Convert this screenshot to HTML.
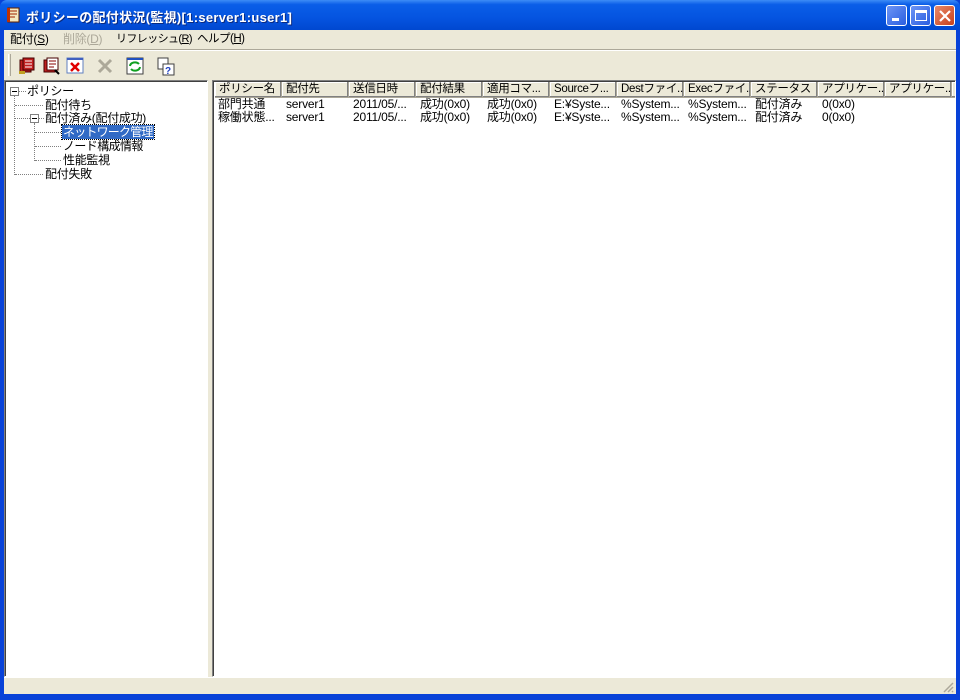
<!DOCTYPE html>
<html><head><meta charset="utf-8"><style>
*{margin:0;padding:0;box-sizing:border-box}
body{width:960px;height:700px;overflow:hidden;background:#0842d8;font-family:"Liberation Sans","Noto Sans CJK JP",sans-serif;font-size:12px;position:relative}
.abs{position:absolute}
#title{left:0;top:0;width:960px;height:30px;background:linear-gradient(#3d8cf6,#0a5ee8 15%,#0554e0 60%,#0048d0);border-radius:7px 7px 0 0}
#title .t{left:26px;top:7px;color:#fff;font-weight:bold;font-size:13px;letter-spacing:0.3px;text-shadow:1px 1px #0a2a80}
.btn{top:5px;width:21px;height:21px;border:1px solid #fff;border-radius:3px;background:linear-gradient(135deg,#6d95f5,#2a5ee0)}
#client{left:4px;top:30px;width:952px;height:664px;background:#ece9d8}
.tx{position:absolute;white-space:nowrap;line-height:13px;letter-spacing:-0.3px}
.pane{background:#fff;border-top:1px solid #808080;border-left:1px solid #808080;border-right:1px solid #fff;border-bottom:1px solid #fff;box-shadow:inset 1px 1px #404040}
.tb{position:absolute;top:25px;width:22px;height:22px}
.hd{position:absolute;top:1px;height:16px;background:#ece9d8;border-right:1px solid #aca899;border-bottom:1px solid #aca899;box-shadow:inset -1px -1px #808080,inset 1px 1px #fff;padding-left:4px;line-height:15px;white-space:nowrap;overflow:hidden;letter-spacing:-0.3px;font-size:11.5px}
.c{position:absolute;white-space:nowrap;line-height:13px;letter-spacing:-0.2px}
.dot{position:absolute;border-left:1px dotted #808080}
.doth{position:absolute;border-top:1px dotted #808080}
</style></head><body>
<div id="title" class="abs">
 <svg class="abs" style="left:6px;top:7px" width="16" height="16"><rect x="2" y="1" width="11" height="14" fill="#f4e8c0" stroke="#602000"/><path d="M4 4h7M4 7h7M4 10h5" stroke="#a02000"/><rect x="1" y="1" width="3" height="14" fill="#c03000"/></svg>
 <div class="abs t">ポリシーの配付状況(監視)[1:server1:user1]</div>
 <div class="abs btn" style="left:886px"><div class="abs" style="left:5px;top:12px;width:7px;height:3px;background:#fff"></div></div>
 <div class="abs btn" style="left:910px"><div class="abs" style="left:4px;top:4px;width:12px;height:11px;border:1px solid #fff;border-top:3px solid #fff"></div></div>
 <div class="abs btn" style="left:934px;background:linear-gradient(135deg,#e88a6a,#c8401c)"><svg class="abs" style="left:3px;top:3px" width="14" height="14"><path d="M2 2L12 12M12 2L2 12" stroke="#fff" stroke-width="2.2"/></svg></div>
</div>
<div id="client" class="abs">
 <div class="tx" style="left:6px;top:3px">配付(<u>S</u>)</div>
 <div class="tx" style="left:59px;top:3px;color:#aca899">削除(<u>D</u>)</div>
 <div class="tx" style="left:112px;top:3px;font-size:11px;letter-spacing:-0.6px">リフレッシュ(<u>R</u>)</div>
 <div class="tx" style="left:193px;top:3px;font-size:11.5px;letter-spacing:-0.5px">ヘルプ(<u>H</u>)</div>
 <div class="abs" style="left:0;top:19px;width:952px;height:2px;border-top:1px solid #aca899;border-bottom:1px solid #fff"></div>
 <div class="abs" style="left:4px;top:24px;width:3px;height:22px;border-left:1px solid #fff;border-right:1px solid #aca899"></div>
 <svg class="tb" style="left:12px" viewBox="0 0 22 22"><rect x="4" y="5" width="11" height="12" fill="#c02020" stroke="#400"/><rect x="7" y="3" width="11" height="12" fill="#c02020" stroke="#400"/><path d="M9 6h7M9 9h7M9 12h7" stroke="#fff"/><rect x="3" y="16" width="6" height="3" fill="#c0a020"/></svg>
 <svg class="tb" style="left:36px" viewBox="0 0 22 22"><rect x="4" y="5" width="11" height="12" fill="#c02020" stroke="#400"/><rect x="7" y="3" width="11" height="12" fill="#fff" stroke="#400"/><path d="M9 6h7M9 9h7M9 12h5" stroke="#800"/><path d="M15 15l4 4" stroke="#000" stroke-width="2"/></svg>
 <svg class="tb" style="left:60px" viewBox="0 0 22 22"><rect x="3" y="3" width="16" height="15" fill="#fff" stroke="#6080c0"/><rect x="3" y="3" width="16" height="2" fill="#4060c0"/><path d="M7 8l8 8M15 8l-8 8" stroke="#e00000" stroke-width="2.5"/></svg>
 <svg class="tb" style="left:90px" viewBox="0 0 22 22"><path d="M5 5l12 12M17 5L5 17" stroke="#aca899" stroke-width="3"/></svg>
 <svg class="tb" style="left:120px" viewBox="0 0 22 22"><rect x="3" y="3" width="16" height="16" fill="#fff" stroke="#404040"/><rect x="3" y="3" width="16" height="2" fill="#2050c0"/><path d="M6 11a5 4 0 0 1 9-2M16 12a5 4 0 0 1-9 2" stroke="#10a020" stroke-width="2" fill="none"/></svg>
 <svg class="tb" style="left:151px" viewBox="0 0 22 22"><rect x="3" y="3" width="10" height="11" fill="#fff" stroke="#404040"/><rect x="8" y="9" width="11" height="11" fill="#fff" stroke="#404040"/><text x="10" y="19" font-size="10" font-weight="bold" fill="#2040c0" font-family="Liberation Sans">?</text></svg>
 <div class="abs pane" style="left:0;top:50px;width:204px;height:597px">
  <div class="abs" style="left:5px;top:6px;width:9px;height:9px;border:1px solid #808080;background:#fff"><div class="abs" style="left:1px;top:3px;width:5px;height:1px;background:#000"></div></div>
  <div class="doth" style="left:14px;top:10px;width:7px"></div>
  <div class="tx" style="left:22px;top:4px">ポリシー</div>
  <div class="dot" style="left:9px;top:15px;height:79px"></div>
  <div class="doth" style="left:10px;top:24px;width:28px"></div>
  <div class="tx" style="left:40px;top:18px">配付待ち</div>
  <div class="abs" style="left:25px;top:33px;width:9px;height:9px;border:1px solid #808080;background:#fff"><div class="abs" style="left:1px;top:3px;width:5px;height:1px;background:#000"></div></div>
  <div class="doth" style="left:10px;top:37px;width:15px"></div><div class="doth" style="left:34px;top:37px;width:5px"></div>
  <div class="tx" style="left:40px;top:31px">配付済み(配付成功)</div>
  <div class="dot" style="left:29px;top:42px;height:38px"></div>
  <div class="doth" style="left:30px;top:51px;width:26px"></div>
  <div class="tx" style="left:57px;top:44px;color:#fff;background:#316ac5;outline:1px dotted #000;padding:0 1px;letter-spacing:-0.8px;line-height:14px">ネットワーク管理</div>
  <div class="doth" style="left:30px;top:65px;width:26px"></div>
  <div class="tx" style="left:58px;top:59px;letter-spacing:-0.6px">ノード構成情報</div>
  <div class="doth" style="left:30px;top:79px;width:26px"></div>
  <div class="tx" style="left:58px;top:73px">性能監視</div>
  <div class="doth" style="left:10px;top:93px;width:28px"></div>
  <div class="tx" style="left:40px;top:87px">配付失敗</div>
 </div>
 <div class="abs pane" style="left:208px;top:50px;width:744px;height:597px;overflow:hidden">
  <div class="hd" style="left:2px;width:67px">ポリシー名</div>
  <div class="hd" style="left:69px;width:67px">配付先</div>
  <div class="hd" style="left:136px;width:67px">送信日時</div>
  <div class="hd" style="left:203px;width:67px">配付結果</div>
  <div class="hd" style="left:270px;width:67px">適用コマ...</div>
  <div class="hd" style="left:337px;width:67px">Sourceフ...</div>
  <div class="hd" style="left:404px;width:67px">Destファイ...</div>
  <div class="hd" style="left:471px;width:67px">Execファイ...</div>
  <div class="hd" style="left:538px;width:67px">ステータス</div>
  <div class="hd" style="left:605px;width:67px">アプリケー...</div>
  <div class="hd" style="left:672px;width:67px">アプリケー...</div>
  <div class="hd" style="left:739px;width:20px"></div>
  <div class="c" style="left:5px;top:17px">部門共通</div><div class="c" style="left:5px;top:30px">稼働状態...</div>
  <div class="c" style="left:73px;top:17px">server1</div><div class="c" style="left:73px;top:30px">server1</div>
  <div class="c" style="left:140px;top:17px">2011/05/...</div><div class="c" style="left:140px;top:30px">2011/05/...</div>
  <div class="c" style="left:207px;top:17px">成功(0x0)</div><div class="c" style="left:207px;top:30px">成功(0x0)</div>
  <div class="c" style="left:274px;top:17px">成功(0x0)</div><div class="c" style="left:274px;top:30px">成功(0x0)</div>
  <div class="c" style="left:341px;top:17px">E:¥Syste...</div><div class="c" style="left:341px;top:30px">E:¥Syste...</div>
  <div class="c" style="left:408px;top:17px">%System...</div><div class="c" style="left:408px;top:30px">%System...</div>
  <div class="c" style="left:475px;top:17px">%System...</div><div class="c" style="left:475px;top:30px">%System...</div>
  <div class="c" style="left:542px;top:17px">配付済み</div><div class="c" style="left:542px;top:30px">配付済み</div>
  <div class="c" style="left:609px;top:17px">0(0x0)</div><div class="c" style="left:609px;top:30px">0(0x0)</div>
 </div>
 <div class="abs" style="left:0;top:647px;width:952px;height:17px;border-top:1px solid #fff;background:#ece9d8"></div>
 <svg class="abs" style="left:938px;top:651px" width="12" height="12"><path d="M11 2L2 11M11 6L6 11M11 10L10 11" stroke="#aca899" stroke-width="1.5"/></svg>
</div>
</body></html>
